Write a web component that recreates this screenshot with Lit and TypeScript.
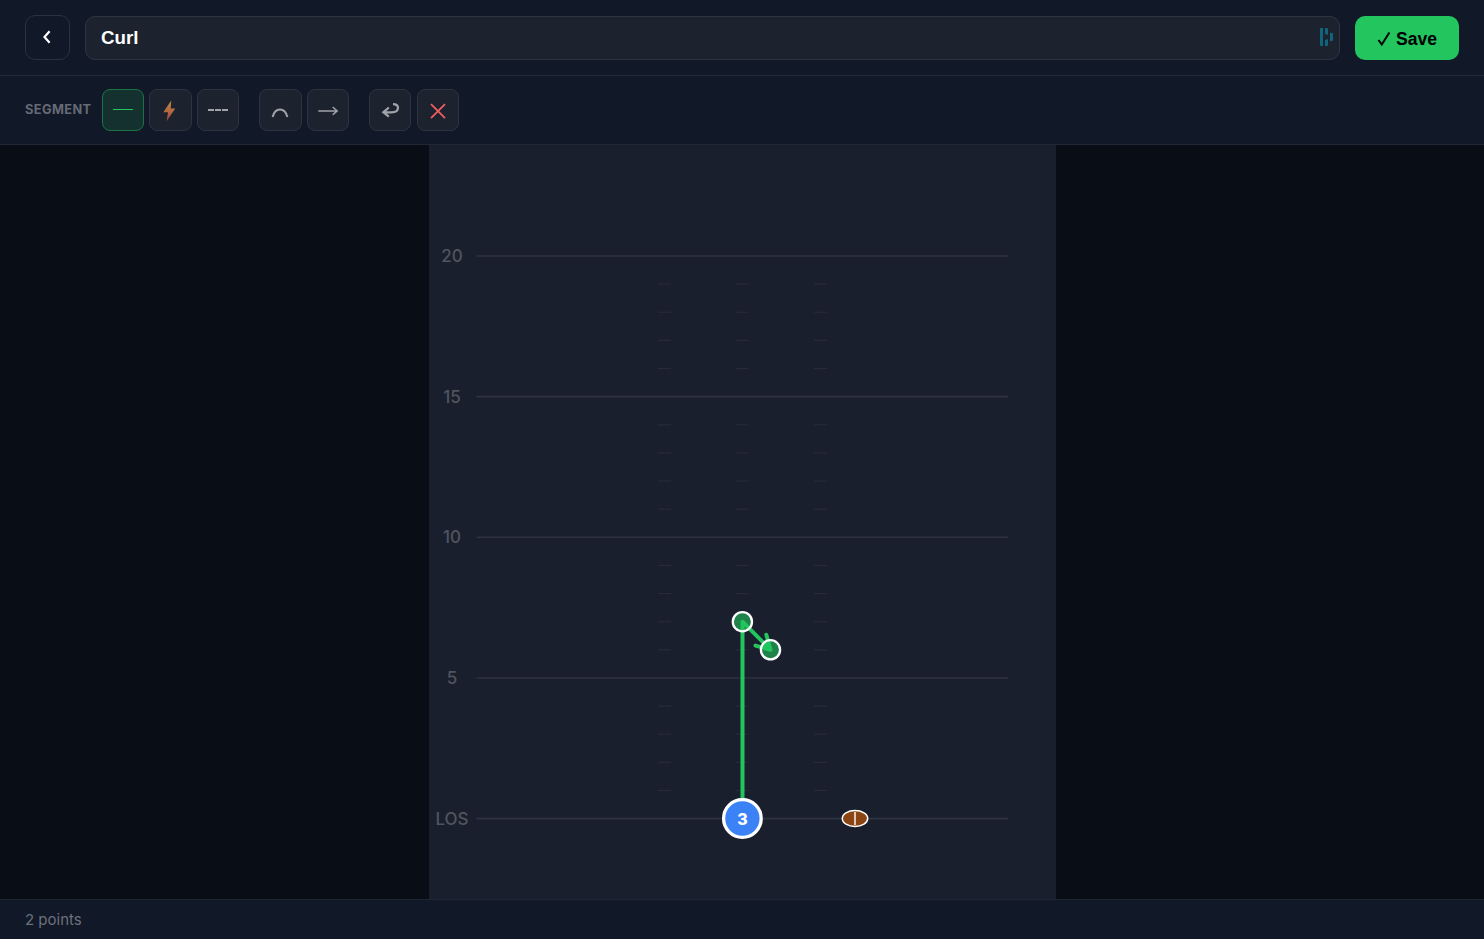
import { LitElement, html, svg, css } from "lit";
import { customElement, state } from "lit/decorators.js";

const YARD = 28.13;
const LOS_Y = 818.6;
const yardY = (n: number) => LOS_Y - n * YARD;

@customElement("route-field")
class RouteField extends LitElement {
  static styles = css`
    :host { display: block; width: 627px; height: 100%; background: #1a1f2d; }
    svg { display: block; width: 627px; height: 754px; }
    .yard { stroke: #2f3340; stroke-width: 1.6; }
    .hash { stroke: #272b38; stroke-width: 1.2; }
    .label { font: 500 17px Inter, sans-serif; fill: #50545e; text-anchor: middle; }
    .route { fill: none; stroke: #22c55e; stroke-width: 4; stroke-linecap: round; stroke-linejoin: round; }
    .node { fill: #22c55e; fill-opacity: 0.6; stroke: #fff; stroke-width: 2.3; }
    .player { fill: #3b82f6; stroke: #fff; stroke-width: 3.3; }
    .number { font: 800 16px Inter, sans-serif; fill: #fff; text-anchor: middle; }
    .ball { fill: #8b4513; stroke: #fff; stroke-width: 1.5; }
    .lace { stroke: #fff; stroke-opacity: 0.7; stroke-width: 2; }
  `;

  render() {
    const hashes = Array.from({ length: 19 }, (_, i) => i + 1).filter((n) => n % 5);
    return html`<svg viewBox="429 145 627 754">
      ${[0, 5, 10, 15, 20].map((n) => svg`
        <line class="yard" x1="476.5" x2="1008" y1=${yardY(n)} y2=${yardY(n)}></line>
        <text class="label" x="452" y=${yardY(n) + 6.1}>${n || "LOS"}</text>`)}
      ${hashes.map((n) => [664.5, 742.2, 820.5].map((x) => svg`
        <line class="hash" x1=${x - 6.5} x2=${x + 6.5} y1=${yardY(n)} y2=${yardY(n)}></line>`))}
      <path class="route" d="M742.5 818.6V621.7L770.5 649.8M766.3 634.8L770.5 649.8L755.5 645.6"></path>
      <circle class="node" cx="742.4" cy="621.7" r="9.6"></circle>
      <circle class="node" cx="770.5" cy="649.8" r="9.6"></circle>
      <circle class="player" cx="742.4" cy="818.5" r="18.8"></circle>
      <text class="number" x="742.4" y="825">3</text>
      <ellipse class="ball" cx="855" cy="818.5" rx="12.7" ry="8"></ellipse>
      <line class="lace" x1="855" x2="855" y1="812" y2="825"></line>
    </svg>`;
  }
}

@customElement("app-root")
class AppRoot extends LitElement {
  @state() private tool = "line";

  static styles = css`
    :host {
      display: flex; flex-direction: column; width: 100%; height: 100vh; overflow: hidden;
      background: #090d15; color: #fff; font-family: Inter, sans-serif;
    }
    * { box-sizing: border-box; }
    header {
      flex: none; height: 76px; padding: 0 25px; display: flex; align-items: center; gap: 15px;
      background: #111827; border-bottom: 1px solid #222938;
    }
    button { display: flex; align-items: center; justify-content: center; padding: 0; margin: 0; font-family: inherit; }
    .back { width: 45px; height: 45px; border: 1px solid #2b3140; border-radius: 10px; background: transparent; color: #fff; }
    .name {
      flex: 1; height: 44px; margin-top: 1px; padding: 0 5px 0 15px; display: flex; align-items: center; justify-content: space-between;
      border: 1px solid #2e3442; border-radius: 10px; background: #1c222e;
      font: 700 18.7px "Liberation Sans", sans-serif;
    }
    .name span { padding-bottom: 1px; }
    .name svg { margin-bottom: 2px; }
    .save {
      width: 104px; height: 44px; margin-top: 1px; padding-top: 1px; gap: 5px; border: 0; border-radius: 10px;
      background: #22c55e; color: #000; font: 700 17.6px "Liberation Sans", sans-serif;
    }
    .save span { padding-top: 1px; }
    .toolbar {
      flex: none; height: 69px; padding: 0 25px; display: flex; align-items: center; gap: 19.8px;
      background: #111827; border-bottom: 1px solid #202735;
    }
    .group { display: flex; align-items: center; gap: 5.3px; }
    .segment { width: 71.3px; padding-bottom: 1px; font-size: 12.8px; font-weight: 700; letter-spacing: 0.4px; color: #656a75; }
    .tool { width: 42.4px; height: 42px; border: 1px solid #2d3341; border-radius: 8px; background: #1c222e; }
    .tool.active { border-color: #1b7443; background: #15312f; }
    .tool svg { display: block; flex: none; }
    main { flex: 1; min-height: 0; display: flex; justify-content: center; padding-left: 1px; }
    footer {
      flex: none; height: 40px; padding: 0 25px; display: flex; align-items: center;
      background: #111827; border-top: 1px solid #1f2734; color: #6b707b; font-size: 15px;
    }
  `;

  private tools = [
    [
      { id: "line", icon: svg`<path d="M11 20.5H31" stroke="#22c55e"/>` },
      { id: "bolt", icon: svg`<defs><linearGradient id="bolt" x1="0" y1="0" x2="0" y2="1"><stop offset="0" stop-color="#b18a43"/><stop offset=".5" stop-color="#b36a40"/><stop offset="1" stop-color="#a24148"/></linearGradient></defs><path d="M22.2 11.6L14.3 23.3H19.1L17.5 32.2L26.3 19.5H21.8Z" fill="url(#bolt)"/>` },
      { id: "dash", icon: svg`<path d="M11 21H17M18 21H24M25 21H31" stroke="#a0a3a9" stroke-width="2"/>` },
    ],
    [
      { id: "curve", icon: svg`<path d="M13.6 28C14.8 23.2 17.3 20.4 21 20.4S27.2 23.2 28.4 28" fill="none" stroke="#a0a3a9" stroke-width="2"/>` },
      { id: "arrow", icon: svg`<path d="M11.3 21.9H30M25.7 18L30.2 21.9L25.7 25.8" fill="none" stroke="#a0a3a9" stroke-width="1.5"/>` },
    ],
    [
      { id: "undo", icon: svg`<path d="M24 15.1C27.7 15.1 29 16.2 29 18.7C29 22 26.7 23.3 22.5 23.3H15M19.9 18.5L14.3 23.3L19.9 27.7" fill="none" stroke="#a0a3a9" stroke-width="2.2"/>` },
      { id: "clear", icon: svg`<path d="M14 15.2L28 29.2M28 15.2L14 29.2" stroke="#f05d60" stroke-width="1.8"/>` },
    ],
  ];

  render() {
    return html`
      <header>
        <button class="back" aria-label="Back">
          <svg width="19" height="23" viewBox="0 0 19 23"><path d="M11.6 5.2L6.5 11L11.6 16.7" fill="none" stroke="#fff" stroke-width="2.2"/></svg>
        </button>
        <div class="name"><span>Curl</span>
          <svg width="15" height="20" viewBox="0 0 15 20" fill="#10657c"><path d="M1 1H4V19H1.5L1 18.5ZM6 1H8.2L9 2V8L6 7ZM6 13L9 12V18L8.2 19H6ZM11 5.5L14 6.5V13.5L11 14.5Z"/></svg>
        </div>
        <button class="save">
          <svg width="14" height="16" viewBox="0 0 14 16"><path d="M1.5 9L4.8 13.5L12.4 1.5" fill="none" stroke="#000" stroke-width="2"/></svg><span>Save</span>
        </button>
      </header>
      <div class="toolbar">
        ${this.tools.map((group, i) => html`<div class="group">
          ${i === 0 ? html`<span class="segment">SEGMENT</span>` : ""}
          ${group.map((t) => html`<button class="tool ${this.tool === t.id ? "active" : ""}" aria-label=${t.id} @click=${() => (this.tool = t.id)}>
            <svg width="42" height="42" viewBox="0 0 42 42">${t.icon}</svg></button>`)}
        </div>`)}
      </div>
      <main><route-field></route-field></main>
      <footer>2 points</footer>`;
  }
}
